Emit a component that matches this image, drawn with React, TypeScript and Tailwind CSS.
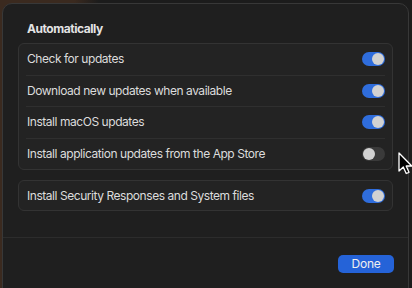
import React from "react";

function Toggle({ on }: { on: boolean }) {
  return (
    <div
      className={
        on
          ? "w-[23px] h-[14px] rounded-full bg-[#2f6ddc] flex items-center justify-end pr-[1px]"
          : "w-[23px] h-[14px] rounded-full bg-[#3a3a3a] flex items-center justify-start pl-[1px]"
      }
    >
      <div className="w-[12px] h-[12px] rounded-full bg-[#d2d2d2]" />
    </div>
  );
}

function Row({ label, on, last }: { label: string; on: boolean; last?: boolean }) {
  return (
    <div className="flex flex-col">
      <div className="h-[30.5px] flex items-center justify-between pl-[8px] pr-[7px]">
        <span className="text-[12px] tracking-[-0.45px] text-[#dcdcdc]">{label}</span>
        <Toggle on={on} />
      </div>
      {!last && <div className="mx-[7px] h-px bg-[#2f2f2f]" />}
    </div>
  );
}

export default function App() {
  return (
    <div
      className="w-[412px] h-[288px] overflow-hidden relative bg-[linear-gradient(90deg,#3b2a1f_0%,#3b2a1f_18%,#1c1c1c_24%,#1c1c1c_100%)]"
      style={{ fontFamily: "Inter, 'Liberation Sans', sans-serif" }}
    >
      <div className="ml-[2px] mt-[3px] w-[407px] h-[300px] rounded-[10px] border border-[#383838] bg-[#1f1f1f] flex flex-col">
        <div className="pl-[24px] pt-[11px] h-[39px]">
          <span className="text-[12px] font-bold tracking-[-0.45px] text-[#e4e4e4] leading-[16px]">Automatically</span>
        </div>
        <div className="mx-[15px] rounded-[6px] border border-[#333333] bg-[#232323] flex flex-col">
          <Row label="Check for updates" on />
          <Row label="Download new updates when available" on />
          <Row label="Install macOS updates" on />
          <Row label="Install application updates from the App Store" on={false} last />
        </div>
        <div className="mx-[15px] mt-[10px] rounded-[6px] border border-[#333333] bg-[#232323] flex flex-col">
          <div className="h-[29px] flex items-center justify-between pl-[8px] pr-[7px]">
            <span className="text-[12px] tracking-[-0.45px] text-[#dcdcdc]">Install Security Responses and System files</span>
            <Toggle on />
          </div>
        </div>
        <div className="mt-[26px] h-px bg-[#2c2c2c]" />
        <div className="flex justify-end pr-[14px] pt-[17px]">
          <div className="w-[56px] h-[18px] rounded-[5px] bg-[#2563d8] flex items-center justify-center text-[12px] tracking-[-0.2px] text-[#f0f0f0] leading-none">
            Done
          </div>
        </div>
      </div>
      <svg
        className="absolute left-[398px] top-[152px]"
        width="16"
        height="26"
        viewBox="0 0 16 26"
      >
        <path
          d="M1 1 L1 19 L5.3 15 L8.2 21.5 L11 20.3 L8.2 14 L13.8 14 Z"
          fill="#000"
          stroke="#fff"
          strokeWidth="1.3"
          strokeLinejoin="round"
        />
      </svg>
    </div>
  );
}
